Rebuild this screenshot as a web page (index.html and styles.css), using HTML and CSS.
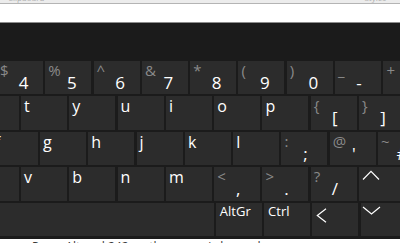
FILE: index.html
```html
<!DOCTYPE html>
<html>
<head>
<meta charset="utf-8">
<link rel="stylesheet" href="styles.css">
</head>
<body>
<div class="chrome"><span class="tiny">Clipboard</span><span class="tiny">Styles</span></div>
<div class="field"></div>
<div class="kb">
  <div class="row r1">
    <div class="key"><span class="sec">$</span><span class="main dig">4</span></div>
    <div class="key"><span class="sec">%</span><span class="main dig">5</span></div>
    <div class="key"><span class="sec">^</span><span class="main dig">6</span></div>
    <div class="key"><span class="sec">&amp;</span><span class="main dig">7</span></div>
    <div class="key"><span class="sec">*</span><span class="main dig">8</span></div>
    <div class="key"><span class="sec">(</span><span class="main dig">9</span></div>
    <div class="key"><span class="sec">)</span><span class="main dig">0</span></div>
    <div class="key"><span class="sec">_</span><span class="main">-</span></div>
    <div class="key"><span class="sec">+</span><span class="main">=</span></div>
  </div>
  <div class="row r2">
    <div class="key"><span class="let">r</span></div>
    <div class="key"><span class="let">t</span></div>
    <div class="key"><span class="let">y</span></div>
    <div class="key"><span class="let">u</span></div>
    <div class="key"><span class="let">i</span></div>
    <div class="key"><span class="let">o</span></div>
    <div class="key"><span class="let">p</span></div>
    <div class="key"><span class="sec">{</span><span class="main">[</span></div>
    <div class="key"><span class="sec">}</span><span class="main">]</span></div>
  </div>
  <div class="row r3">
    <div class="key"><span class="let">f</span></div>
    <div class="key"><span class="let">g</span></div>
    <div class="key"><span class="let">h</span></div>
    <div class="key"><span class="let">j</span></div>
    <div class="key"><span class="let">k</span></div>
    <div class="key"><span class="let">l</span></div>
    <div class="key"><span class="sec">:</span><span class="main">;</span></div>
    <div class="key"><span class="sec">@</span><span class="main">'</span></div>
    <div class="key"><span class="sec">~</span><span class="main">#</span></div>
  </div>
  <div class="row r4">
    <div class="key"><span class="let">c</span></div>
    <div class="key"><span class="let">v</span></div>
    <div class="key"><span class="let">b</span></div>
    <div class="key"><span class="let">n</span></div>
    <div class="key"><span class="let">m</span></div>
    <div class="key"><span class="sec">&lt;</span><span class="main">,</span></div>
    <div class="key"><span class="sec">&gt;</span><span class="main">.</span></div>
    <div class="key"><span class="sec">?</span><span class="main">/</span></div>
    <div class="key"><svg class="ico up" width="18" height="10" viewBox="0 0 18 10"><polyline points="1,9.5 9,1.3 17,9.5"/></svg></div>
  </div>
  <div class="row r5">
    <div class="key space"></div>
    <div class="key"><span class="word">AltGr</span></div>
    <div class="key"><span class="word">Ctrl</span></div>
    <div class="key"><svg class="ico left" width="11" height="15" viewBox="0 0 11 15"><polyline points="10,0.7 1.3,7.5 10,14.3"/></svg></div>
    <div class="key"><svg class="ico down" width="19" height="9" viewBox="0 0 19 9"><polyline points="1,1 9.5,8 18,1"/></svg></div>
  </div>
</div>
<div class="status">Press Alt and 242 on the numeric keypad</div>
</body>
</html>
```
FILE: styles.css
```css
html, body {
  margin: 0;
  padding: 0;
  width: 400px;
  height: 243px;
  overflow: hidden;
  background: #ffffff;
  font-family: "Open Sans", "Noto Sans", sans-serif;
}

.chrome {
  height: 3px;
  background: #ececec;
  border-bottom: 1px solid #b4b4b4;
  display: flex;
  justify-content: space-between;
  padding: 0 14px 0 8px;
  overflow: hidden;
}

.tiny {
  font-size: 8px;
  line-height: 8px;
  margin-top: -6px;
  color: #b0b0b0;
}

.field {
  height: 18px;
  background: #ffffff;
  border-bottom: 1px solid #8d8d8d;
}

.kb {
  height: 216px;
  box-sizing: border-box;
  padding-top: 38px;
  background: #1b1b1b;
  display: flex;
  flex-direction: column;
  gap: 2px;
  overflow: hidden;
}

.row {
  display: flex;
  gap: 2.3px;
  height: 33.4px;
  flex: 0 0 33.4px;
}

.r1 { margin-left: -3px; }
.r2 { margin-left: -27.3px; }
.r3 { margin-left: -8.3px; }
.r4 { margin-left: -27.3px; }
.r5 { margin-left: 0; }

.key {
  flex: 0 0 46px;
  width: 46px;
  box-sizing: border-box;
  background: #2c2c2c;
  padding: 0 3px;
  display: flex;
  flex-direction: column;
  color: #ffffff;
  overflow: hidden;
}

.key.space {
  flex: 0 0 213.5px;
  width: 213.5px;
}

.sec {
  font-size: 15px;
  line-height: 18px;
  height: 18px;
  color: #8a8a8a;
}

.main {
  font-size: 17px;
  line-height: 20px;
  margin-top: -6px;
  text-align: center;
  padding-left: 2px;
}

.main.dig {
  padding-left: 7px;
}

.let {
  font-size: 16px;
  line-height: 20px;
}

.word {
  font-size: 13px;
  line-height: 16px;
  padding-left: 1px;
}

.ico {
  display: block;
  fill: none;
  stroke: #ffffff;
  stroke-width: 1.2;
}

.ico.up { margin-top: 3px; }
.ico.down { margin-top: 3.5px; margin-left: -2px; }
.ico.left { margin-top: 5.5px; margin-left: 1px; }

.status {
  height: 12px;
  box-sizing: border-box;
  padding-top: 2px;
  background: #ffffff;
  padding-left: 32px;
  font-size: 12px;
  line-height: 12px;
  color: #3a3a3a;
  white-space: nowrap;
  overflow: hidden;
}
```
